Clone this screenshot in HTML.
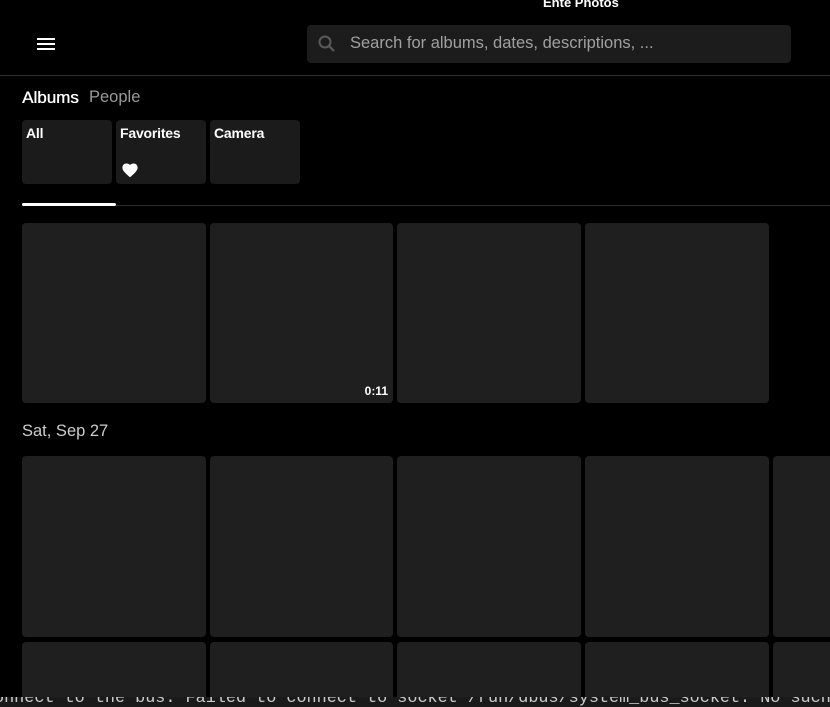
<!DOCTYPE html>
<html><head><meta charset="utf-8"><style>
*{margin:0;padding:0;box-sizing:border-box}
html,body{width:830px;height:707px;overflow:hidden}
body{background:#000;position:relative;font-family:"Liberation Sans",sans-serif;color:#fff}
.a{position:absolute}
.t{position:absolute;background:#1f1f1f;border-radius:4px}
.c{position:absolute;background:#1b1b1b;border-radius:4px;font-size:14px;padding:5px 4px;font-weight:bold;letter-spacing:-0.2px}
</style></head><body>
<div class="a" style="left:543px;top:-5px;font-size:13px;font-weight:bold">Ente Photos</div>
<div class="a" style="left:37px;top:38px;width:18px;height:2px;background:#fff;box-shadow:0 5px 0 #fff,0 10px 0 #fff"></div>
<div class="a" style="left:307px;top:25px;width:484px;height:38px;background:#1c1c1c;border-radius:4px"></div>
<svg class="a" style="left:317px;top:34px" width="20" height="20" viewBox="0 0 20 20"><circle cx="8" cy="8" r="5.5" fill="none" stroke="#5a5a5a" stroke-width="2"/><path d="M12 12l5 5" stroke="#5a5a5a" stroke-width="2.2"/></svg>
<div class="a" style="left:350px;top:34px;font-size:16.5px;color:#a0a0a0">Search for albums, dates, descriptions, ...</div>
<div class="a" style="left:0;top:75px;width:830px;height:1px;background:#2e2e2e"></div>
<div class="a" style="left:22px;top:88px;font-size:17px;text-shadow:0.4px 0 0 #fff">Albums</div>
<div class="a" style="left:89px;top:88px;font-size:16.5px;color:#999">People</div>
<div class="c" style="left:22px;top:120px;width:90px;height:64px">All</div>
<div class="c" style="left:116px;top:120px;width:90px;height:64px">Favorites<svg style="position:absolute;left:5px;top:42px" width="18" height="16" viewBox="0 0 24 22"><path d="M12 21l-1.5-1.3C5 14.8 1.5 11.6 1.5 7.6 1.5 4.4 4 2 7.1 2c1.8 0 3.5.8 4.9 2.1C13.4 2.8 15.1 2 16.9 2 20 2 22.5 4.4 22.5 7.600c0 4-3.5 7.2-9 12.1z" fill="#fff"/></svg></div>
<div class="c" style="left:210px;top:120px;width:90px;height:64px">Camera</div>
<div class="a" style="left:22px;top:203px;width:94px;height:3px;background:#fff;border-radius:2px"></div>
<div class="a" style="left:116px;top:205px;width:714px;height:1px;background:#2e2e2e"></div>
<div class="t" style="left:22px;top:223px;width:184px;height:180px"></div>
<div class="t" style="left:210px;top:223px;width:183px;height:180px"><span style="position:absolute;right:5px;bottom:5px;font-size:12px;font-weight:bold">0:11</span></div>
<div class="t" style="left:397px;top:223px;width:184px;height:180px"></div>
<div class="t" style="left:585px;top:223px;width:184px;height:180px"></div>
<div class="a" style="left:22px;top:422px;font-size:16.5px;color:#ccc">Sat, Sep 27</div>
<div class="t" style="left:22px;top:456px;width:184px;height:181px"></div>
<div class="t" style="left:210px;top:456px;width:183px;height:181px"></div>
<div class="t" style="left:397px;top:456px;width:184px;height:181px"></div>
<div class="t" style="left:585px;top:456px;width:184px;height:181px"></div>
<div class="t" style="left:773px;top:456px;width:60px;height:181px"></div>
<div class="t" style="left:22px;top:642px;width:184px;height:60px"></div>
<div class="t" style="left:210px;top:642px;width:183px;height:60px"></div>
<div class="t" style="left:397px;top:642px;width:184px;height:60px"></div>
<div class="t" style="left:585px;top:642px;width:184px;height:60px"></div>
<div class="t" style="left:773px;top:642px;width:60px;height:60px"></div>
<div class="a" style="left:0;top:697px;width:830px;height:10px;overflow:hidden;background:#1a1a1a"><div style="position:absolute;left:-6px;top:-9px;white-space:nowrap;font-family:'Liberation Mono',monospace;font-size:16.4px;color:#ccc;transform:scaleX(1.025);transform-origin:0 0">onnect to the bus: Failed to connect to socket /run/dbus/system_bus_socket: No such</div></div>
</body></html>
